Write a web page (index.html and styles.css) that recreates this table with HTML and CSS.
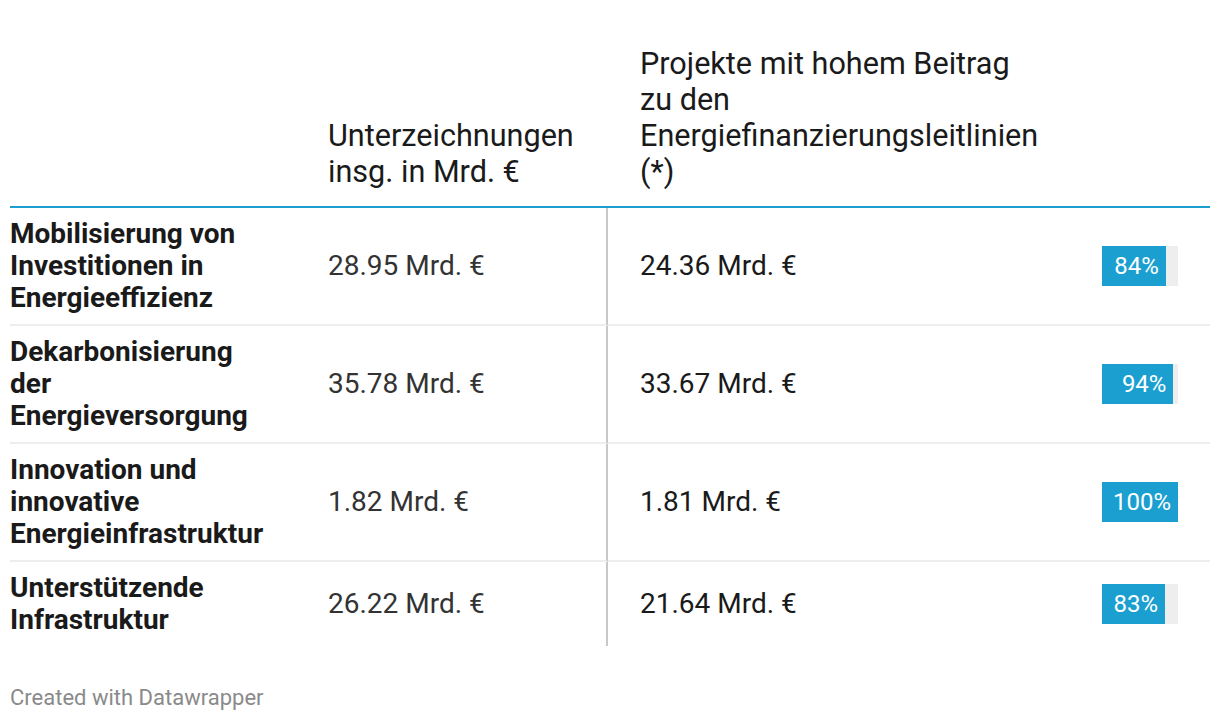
FILE: index.html
```html
<!DOCTYPE html>
<html lang="de">
<head>
<meta charset="utf-8">
<title>Energiefinanzierung</title>
<link rel="stylesheet" href="styles.css">
</head>
<body>
<div class="chart">
  <div class="row head">
    <div class="cell c1"></div>
    <div class="cell c2">Unterzeichnungen<br>insg. in Mrd. €</div>
    <div class="cell c3">Projekte mit hohem Beitrag<br>zu den<br>Energiefinanzierungsleitlinien<br>(*)</div>
    <div class="cell c4"></div>
  </div>

  <div class="row body">
    <div class="cell c1 label">Mobilisierung von Investitionen in Energieeffizienz</div>
    <div class="cell c2">28.95 Mrd. €</div>
    <div class="cell c3">24.36 Mrd. €</div>
    <div class="cell c4"><div class="track"><div class="fill" style="width:84%">84%</div></div></div>
  </div>

  <div class="row body">
    <div class="cell c1 label">Dekarbonisierung der Energieversorgung</div>
    <div class="cell c2">35.78 Mrd. €</div>
    <div class="cell c3">33.67 Mrd. €</div>
    <div class="cell c4"><div class="track"><div class="fill" style="width:94%">94%</div></div></div>
  </div>

  <div class="row body">
    <div class="cell c1 label">Innovation und innovative Energieinfrastruktur</div>
    <div class="cell c2">1.82 Mrd. €</div>
    <div class="cell c3">1.81 Mrd. €</div>
    <div class="cell c4"><div class="track"><div class="fill" style="width:100%">100%</div></div></div>
  </div>

  <div class="row body last">
    <div class="cell c1 label">Unterstützende Infrastruktur</div>
    <div class="cell c2">26.22 Mrd. €</div>
    <div class="cell c3">21.64 Mrd. €</div>
    <div class="cell c4"><div class="track"><div class="fill" style="width:83%">83%</div></div></div>
  </div>
</div>
<div class="footer">Created with Datawrapper</div>
</body>
</html>
```

FILE: styles.css
```css
html, body {
  margin: 0;
  padding: 0;
  background: #ffffff;
}

body {
  font-family: Roboto, "Liberation Sans", Arial, sans-serif;
  color: #1a1a1a;
  padding: 46px 10px 0 10px;
  width: 1200px;
}

.chart {
  display: flex;
  flex-direction: column;
}

.row {
  display: grid;
  grid-template-columns: 308px 290px 484px 118px;
}

.head {
  align-items: end;
  font-size: 30.6px;
  line-height: 36px;
  padding-bottom: 16px;
  border-bottom: 2px solid #1b9fd0;
}

.body {
  font-size: 28px;
  line-height: 32px;
}

.body .cell {
  padding-top: 10px;
  padding-bottom: 10px;
  border-bottom: 2px solid #eeeeee;
  display: flex;
  align-items: center;
}

.body.last .cell {
  border-bottom: none;
}

.c1 {
  padding-right: 46px;
}

.c2 {
  padding-left: 10px;
}

.body .c2 {
  border-right: 2px solid #c8c8c8;
  color: #333333;
}

.head .c2 {
  padding-right: 2px;
}

.c3 {
  padding-left: 32px;
}

.c4 {
  padding-left: 10px;
}

.label {
  font-weight: 700;
}

.track {
  width: 76px;
  height: 40px;
  background: #eeeeee;
  display: flex;
}

.fill {
  background: #1b9fd0;
  color: #ffffff;
  font-size: 24px;
  line-height: 40px;
  text-align: right;
  padding-right: 7px;
  box-sizing: border-box;
  white-space: nowrap;
}

.footer {
  margin-top: 39px;
  font-size: 22px;
  line-height: 26px;
  color: #8a8a8a;
}
```
